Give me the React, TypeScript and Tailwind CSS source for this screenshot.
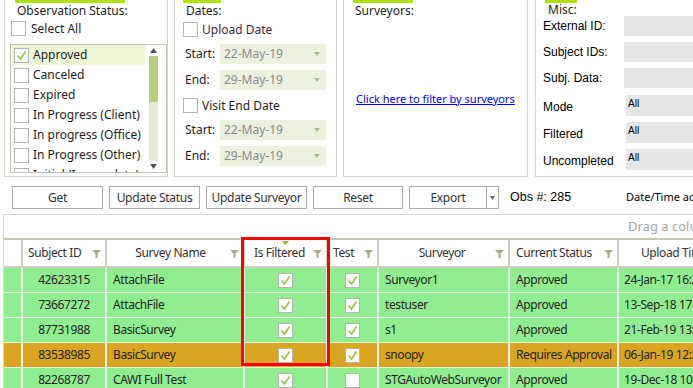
import React from "react";

const Check = ({ checked = false }: { checked?: boolean }) => (
  <div className="w-[15px] h-[15px] border border-[#b4b4b4] bg-white flex items-center justify-center shrink-0">
    {checked && (
      <svg width="13" height="13" viewBox="0 0 13 13">
        <path d="M2.5 6.5 L5.5 10 L10.5 2.5" fill="none" stroke="#96c84a" strokeWidth="1.7" />
      </svg>
    )}
  </div>
);

const Funnel = () => (
  <svg width="9" height="9" viewBox="0 0 9 9" className="shrink-0">
    <path d="M0 1 H9 L5.5 4.5 V9 H3.5 V4.5 Z" fill="#a8a888" />
  </svg>
);

const DateBox = ({ value }: { value: string }) => (
  <div className="w-[106px] h-[20px] bg-[#edf2df] flex items-center pl-[4px] pr-[6px] text-[#8a8a8a]">
    <span className="flex-1">{value}</span>
    <svg width="6" height="4" viewBox="0 0 6 4">
      <path d="M0 0 H6 L3 4 Z" fill="#a9b98d" />
    </svg>
  </div>
);

const statuses = [
  "Approved",
  "Canceled",
  "Expired",
  "In Progress (Client)",
  "In progress (Office)",
  "In Progress (Other)",
  "Initial (Incomplete)",
];

type Row = {
  id: string;
  name: string;
  filt: boolean;
  test: boolean;
  surveyor: string;
  status: string;
  upload: string;
  orange?: boolean;
};

const rows: Row[] = [
  { id: "42623315", name: "AttachFile", filt: true, test: true, surveyor: "Surveyor1", status: "Approved", upload: "24-Jan-17 16:27" },
  { id: "73667272", name: "AttachFile", filt: true, test: true, surveyor: "testuser", status: "Approved", upload: "13-Sep-18 17:05" },
  { id: "87731988", name: "BasicSurvey", filt: true, test: true, surveyor: "s1", status: "Approved", upload: "21-Feb-19 13:44" },
  { id: "83538985", name: "BasicSurvey", filt: true, test: true, surveyor: "snoopy", status: "Requires Approval", upload: "06-Jan-19 12:31", orange: true },
  { id: "82268787", name: "CAWI Full Test", filt: true, test: false, surveyor: "STGAutoWebSurveyor", status: "Approved", upload: "19-Dec-18 10:12" },
];

const cols = "grid grid-cols-[17px_82px_136px_81px_49px_129px_107px_120px] gap-x-[2px]";
const btn = "shrink-0 h-[23px] border border-[#adadad] flex items-center justify-center whitespace-nowrap";

export default function App() {
  return (
    <div className="w-[693px] h-[388px] overflow-hidden bg-white relative font-['Segoe_UI','Noto_Sans',sans-serif] text-[12px] text-[#1e1e1e]">
      {/* Top filter panels */}
      <div className="flex h-[177px] pl-[4px] gap-[6px]">
        {/* Observation Status */}
        <div className="w-[164px] h-full border-l border-r border-b border-[#d2d2c8] shrink-0">
          <div className="ml-[10px] w-[110px] h-[3px] bg-[#b4e000]" />
          <div className="pl-[12px] leading-[15px]">Observation Status:</div>
          <div className="mt-[3px] ml-[6px] flex items-center gap-[5px] leading-[15px]">
            <Check />
            <span>Select All</span>
          </div>
          <div className="mt-[8px] ml-[5px] w-[157px] h-[129px] border border-[#c4c4b6] flex overflow-hidden">
            <div className="w-[134px] pl-[1px] shrink-0">
              {statuses.map((s, i) => (
                <div
                  key={s}
                  className={`h-[20px] flex items-center gap-[4px] pl-[2px] whitespace-nowrap ${i === 0 ? "bg-[#eef6d6]" : ""}`}
                >
                  <Check checked={i === 0} />
                  <span>{s}</span>
                </div>
              ))}
            </div>
            <div className="w-[12px] ml-[2px] flex flex-col items-center pt-[3px] pb-[3px]">
              <svg width="7" height="5" viewBox="0 0 7 5">
                <path d="M0 5 L3.5 0 L7 5 Z" fill="#555" />
              </svg>
              <div className="w-[9px] flex-1 mt-[3px] mb-[3px] bg-[#e4e8d8] flex flex-col">
                <div className="h-[46px] bg-[#b8cf7a]" />
              </div>
              <svg width="7" height="5" viewBox="0 0 7 5">
                <path d="M0 0 L7 0 L3.5 5 Z" fill="#555" />
              </svg>
            </div>
          </div>
        </div>

        {/* Dates */}
        <div className="w-[163px] h-full border-l border-r border-b border-[#d2d2c8] shrink-0">
          <div className="ml-[8px] w-[38px] h-[3px] bg-[#b4e000]" />
          <div className="pl-[11px] leading-[15px]">Dates:</div>
          <div className="mt-[4px] ml-[8px] flex items-center gap-[4px] leading-[15px]">
            <Check />
            <span className="text-[#3a2a40]">Upload Date</span>
          </div>
          <div className="mt-[7px] flex items-center">
            <span className="pl-[10px] w-[45px]">Start:</span>
            <DateBox value="22-May-19" />
          </div>
          <div className="mt-[6px] flex items-center">
            <span className="pl-[10px] w-[45px]">End:</span>
            <DateBox value="29-May-19" />
          </div>
          <div className="mt-[8px] ml-[8px] flex items-center gap-[4px] leading-[15px]">
            <Check />
            <span>Visit End Date</span>
          </div>
          <div className="mt-[7px] flex items-center">
            <span className="pl-[10px] w-[45px]">Start:</span>
            <DateBox value="22-May-19" />
          </div>
          <div className="mt-[6px] flex items-center">
            <span className="pl-[10px] w-[45px]">End:</span>
            <DateBox value="29-May-19" />
          </div>
        </div>

        {/* Surveyors */}
        <div className="w-[185px] h-full border-l border-r border-b border-[#d2d2c8] shrink-0">
          <div className="ml-[9px] w-[60px] h-[3px] bg-[#b4e000]" />
          <div className="pl-[11px] leading-[15px]">Surveyors:</div>
          <div className="mt-[73px] pl-[12px] text-[11px] text-[#0000ff] underline whitespace-nowrap">
            Click here to filter by surveyors
          </div>
        </div>

        {/* Misc */}
        <div className="w-[200px] h-full border-l border-b border-[#d2d2c8] shrink-0 ml-[1px]">
          <div className="ml-[9px] w-[32px] h-[3px] bg-[#b4e000]" />
          <div className="pl-[12px] leading-[13px]">Misc:</div>
          <div className="font-['Liberation_Sans',Arial,sans-serif] text-[12px] text-black">
            <div className="flex items-center h-[20px]">
              <span className="pl-[7px] w-[88px]">External ID:</span>
              <div className="w-[80px] h-[20px] bg-[#e6e6e6]" />
            </div>
            <div className="flex items-center h-[20px] mt-[6px]">
              <span className="pl-[7px] w-[88px]">Subject IDs:</span>
              <div className="w-[80px] h-[20px] bg-[#e6e6e6]" />
            </div>
            <div className="flex items-center h-[20px] mt-[6px]">
              <span className="pl-[7px] w-[88px]">Subj. Data:</span>
              <div className="w-[80px] h-[20px] bg-[#e6e6e6]" />
            </div>
            {["Mode", "Filtered", "Uncompleted"].map((l, i) => (
              <div key={l} className={`flex items-center h-[21px] ${i === 0 ? "mt-[7px]" : "mt-[6px]"}`}>
                <span className="pl-[7px] w-[90px] pt-[3px]">{l}</span>
                <div className="w-[80px] h-[21px] bg-[#e6e6e6] text-[10px] pl-[2px] pt-[3px] leading-[12px]">All</div>
              </div>
            ))}
          </div>
        </div>
      </div>

      {/* Buttons row */}
      <div className="flex items-center mt-[9px] pl-[12px] h-[23px] text-[#333] tracking-[-0.3px]">
        <div className={`${btn} w-[91px]`}>Get</div>
        <div className={`${btn} ml-[6px] w-[91px]`}>Update Status</div>
        <div className={`${btn} ml-[6px] w-[101px]`}>Update Surveyor</div>
        <div className={`${btn} ml-[6px] w-[90px]`}>Reset</div>
        <div className="shrink-0 ml-[6px] w-[90px] h-[23px] border border-[#adadad] flex items-center">
          <span className="flex-1 text-center">Export</span>
          <div className="w-[12px] h-full border-l border-[#adadad] flex items-center justify-center">
            <svg width="5" height="4" viewBox="0 0 5 4">
              <path d="M0 0 H5 L2.5 4 Z" fill="#666" />
            </svg>
          </div>
        </div>
        <span className="shrink-0 ml-[11px] w-[116px] whitespace-nowrap font-['Liberation_Sans',Arial,sans-serif] text-[12.5px] tracking-normal text-black">
          Obs #: 285
        </span>
        <span className="shrink-0 text-[11px] tracking-normal text-black whitespace-nowrap">Date/Time acquired</span>
      </div>

      {/* Grid */}
      <div className="mt-[5px] ml-[3px] border-l border-t border-[#d8d8d0] tracking-[-0.4px]">
        <div className="h-[23px] flex items-center pl-[624px] text-[13px] tracking-normal text-[#a8a8a8] whitespace-nowrap">
          Drag a column header here
        </div>
        <div className="h-[2px] bg-[#c8c8ba]" />
        {/* Header */}
        <div className={`${cols} bg-[#cfcfc3] pb-[2px] h-[28px] text-[#333]`}>
          <div className="bg-white" />
          <div className="bg-white flex items-center pl-[5px] pr-[4px]">
            <span className="flex-1">Subject ID</span>
            <Funnel />
          </div>
          <div className="bg-white flex items-center pr-[4px]">
            <span className="flex-1 text-center pl-[4px]">Survey Name</span>
            <Funnel />
          </div>
          <div className="bg-white flex items-center pl-[9px] pr-[4px] relative">
            <span className="flex-1">Is Filtered</span>
            <Funnel />
            <svg width="7" height="4" viewBox="0 0 7 4" className="absolute top-[1px] left-[37px]">
              <path d="M0 0 H7 L3.5 4 Z" fill="#8fb820" />
            </svg>
          </div>
          <div className="bg-white flex items-center pl-[5px] pr-[4px]">
            <span className="flex-1">Test</span>
            <Funnel />
          </div>
          <div className="bg-white flex items-center pr-[4px]">
            <span className="flex-1 text-center pl-[10px]">Surveyor</span>
            <Funnel />
          </div>
          <div className="bg-white flex items-center pl-[6px] pr-[4px]">
            <span className="flex-1 whitespace-nowrap">Current Status</span>
            <Funnel />
          </div>
          <div className="bg-white flex items-center pl-[22px] whitespace-nowrap">Upload Time</div>
        </div>
        {/* Rows */}
        {rows.map((r) => {
          const bg = r.orange ? "bg-[#daa520]" : "bg-[#90ee90]";
          return (
            <div key={r.id} className={`${cols} bg-[#e6f2e6] pb-[1px] h-[25px]`}>
              <div className={bg} />
              <div className={`${bg} flex items-center justify-center`}>{r.id}</div>
              <div className={`${bg} flex items-center pl-[6px]`}>{r.name}</div>
              <div className={`${bg} flex items-center justify-center`}>
                <Check checked={r.filt} />
              </div>
              <div className={`${bg} flex items-center justify-center`}>
                <Check checked={r.test} />
              </div>
              <div className={`${bg} flex items-center pl-[6px] whitespace-nowrap`}>{r.surveyor}</div>
              <div className={`${bg} flex items-center pl-[6px] whitespace-nowrap`}>{r.status}</div>
              <div className={`${bg} flex items-center pl-[5px] whitespace-nowrap`}>{r.upload}</div>
            </div>
          );
        })}
      </div>

      {/* Red highlight annotation */}
      <div className="absolute left-[241px] top-[237px] w-[89px] h-[129px] border-[3px] border-[#ff0000]" />
    </div>
  );
}
